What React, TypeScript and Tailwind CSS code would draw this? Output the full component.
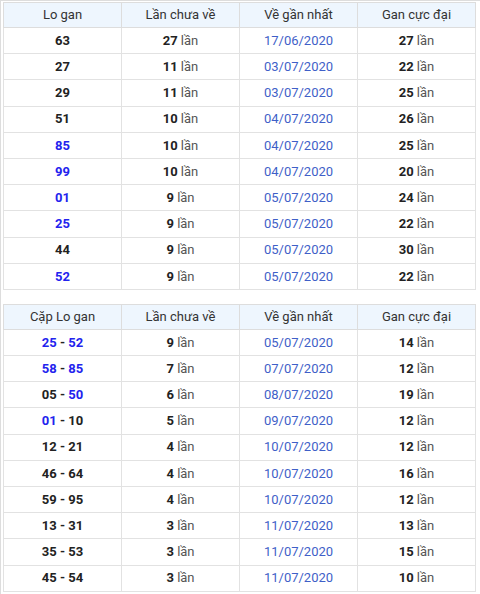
type Cell = { t: string; blue?: boolean };

const loGan: [Cell[], string, string, string][] = [
  [[{ t: '63' }], '27', '17/06/2020', '27'],
  [[{ t: '27' }], '11', '03/07/2020', '22'],
  [[{ t: '29' }], '11', '03/07/2020', '25'],
  [[{ t: '51' }], '10', '04/07/2020', '26'],
  [[{ t: '85', blue: true }], '10', '04/07/2020', '25'],
  [[{ t: '99', blue: true }], '10', '04/07/2020', '20'],
  [[{ t: '01', blue: true }], '9', '05/07/2020', '24'],
  [[{ t: '25', blue: true }], '9', '05/07/2020', '22'],
  [[{ t: '44' }], '9', '05/07/2020', '30'],
  [[{ t: '52', blue: true }], '9', '05/07/2020', '22'],
];

const capLoGan: [Cell[], string, string, string][] = [
  [[{ t: '25', blue: true }, { t: ' - ' }, { t: '52', blue: true }], '9', '05/07/2020', '14'],
  [[{ t: '58', blue: true }, { t: ' - ' }, { t: '85', blue: true }], '7', '07/07/2020', '12'],
  [[{ t: '05' }, { t: ' - ' }, { t: '50', blue: true }], '6', '08/07/2020', '19'],
  [[{ t: '01', blue: true }, { t: ' - ' }, { t: '10' }], '5', '09/07/2020', '12'],
  [[{ t: '12 - 21' }], '4', '10/07/2020', '12'],
  [[{ t: '46 - 64' }], '4', '10/07/2020', '16'],
  [[{ t: '59 - 95' }], '4', '10/07/2020', '12'],
  [[{ t: '13 - 31' }], '3', '11/07/2020', '13'],
  [[{ t: '35 - 53' }], '3', '11/07/2020', '15'],
  [[{ t: '45 - 54' }], '3', '11/07/2020', '10'],
];

function Lan({ n }: { n: string }) {
  return (
    <span>
      <b className="font-bold text-[#222]">{n}</b> <span className="text-[#555]">lần</span>
    </span>
  );
}

function GanTable({ first, rows }: { first: string; rows: [Cell[], string, string, string][] }) {
  return (
    <table className="w-[473px] table-fixed border-collapse border border-[#ddd] text-[13px] text-[#222]">
      <thead>
        <tr className="h-[25px] bg-[#eef6fe]">
          {[first, 'Lần chưa về', 'Về gần nhất', 'Gan cực đại'].map(h => (
            <th key={h} className="border border-[#ddd] font-normal text-[#333]">{h}</th>
          ))}
        </tr>
      </thead>
      <tbody>
        {rows.map((r, i) => (
          <tr key={i} className="h-[26.2px] text-center">
            <td className="border border-[#e2e2e2] font-bold">
              {r[0].map((c, j) => (
                <span key={j} className={c.blue ? 'text-[#2323ee]' : ''}>{c.t}</span>
              ))}
            </td>
            <td className="border border-[#e2e2e2]"><Lan n={r[1]} /></td>
            <td className="border border-[#e2e2e2] text-[#3f5fc8]">{r[2]}</td>
            <td className="border border-[#e2e2e2]"><Lan n={r[3]} /></td>
          </tr>
        ))}
      </tbody>
    </table>
  );
}

export default function App() {
  return (
    <div className="w-[480px] h-[594px] bg-white border-l border-t border-[#ddd] pl-[2px] pt-px flex flex-col gap-[14px] font-['Roboto',_'Noto_Sans',sans-serif]">
      <GanTable first="Lo gan" rows={loGan} />
      <GanTable first="Cặp Lo gan" rows={capLoGan} />
    </div>
  );
}
